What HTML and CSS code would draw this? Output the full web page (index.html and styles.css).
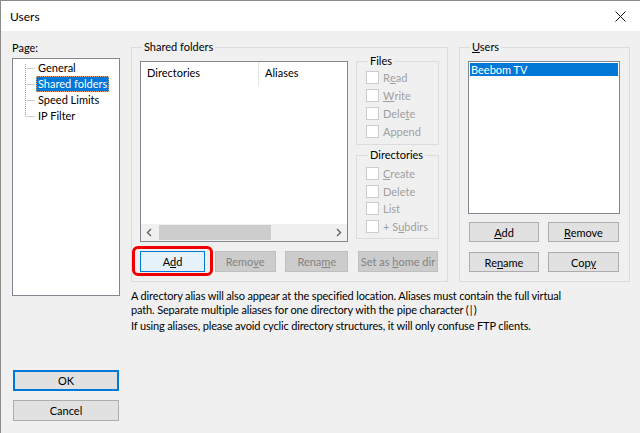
FILE: index.html
```html
<!DOCTYPE html>
<html>
<head>
<meta charset="utf-8">
<link rel="stylesheet" href="styles.css">
</head>
<body>
<div class="window">
  <div class="titlebar">
    <span class="title">Users</span>
    <svg class="close" width="11" height="11" viewBox="0 0 11 11"><path d="M0.5 0.5 L10.5 10.5 M10.5 0.5 L0.5 10.5" stroke="#111" stroke-width="1"/></svg>
  </div>
  <div class="body">
    <div class="leftcol">
      <div class="label">Page:</div>
      <div class="tree">
        <svg class="tree-lines" width="23" height="64" viewBox="0 0 23 64">
          <path d="M12.5 4 V56 M12.5 8.5 H22 M12.5 24.5 H22 M12.5 40.5 H22 M12.5 56.5 H22" stroke="#a0a0a0" stroke-width="1" stroke-dasharray="1 1" fill="none"/>
        </svg>
        <ul class="tree-items">
          <li><span>General</span></li>
          <li class="sel"><span>Shared folders</span></li>
          <li><span>Speed Limits</span></li>
          <li><span>IP Filter</span></li>
        </ul>
      </div>
      <button class="btn ok">OK</button>
      <button class="btn cancel">Cancel</button>
    </div>
    <div class="main">
      <div class="groups">
        <fieldset class="group shared">
          <legend>Shared folders</legend>
          <div class="shared-top">
            <div class="listview">
              <div class="lv-header">
                <div class="col col-dir">Directories</div>
                <div class="col col-alias">Aliases</div>
              </div>
              <div class="lv-body"></div>
              <div class="hscroll">
                <svg width="17" height="15" viewBox="0 0 17 15"><path d="M10 4 L6.5 7.5 L10 11" stroke="#606060" stroke-width="1.4" fill="none"/></svg>
                <div class="track"><div class="thumb"></div></div>
                <svg width="17" height="15" viewBox="0 0 17 15"><path d="M7 4 L10.5 7.5 L7 11" stroke="#606060" stroke-width="1.4" fill="none"/></svg>
              </div>
            </div>
            <div class="perms">
              <fieldset class="group sub files">
                <legend>Files</legend>
                <label class="chk"><span class="box"></span>R<u>e</u>ad</label>
                <label class="chk"><span class="box"></span><u>W</u>rite</label>
                <label class="chk"><span class="box"></span>Dele<u>t</u>e</label>
                <label class="chk"><span class="box"></span>Append</label>
              </fieldset>
              <fieldset class="group sub dirs">
                <legend>Directories</legend>
                <label class="chk"><span class="box"></span><u>C</u>reate</label>
                <label class="chk"><span class="box"></span>Delete</label>
                <label class="chk"><span class="box"></span>List</label>
                <label class="chk"><span class="box"></span>+ S<u>u</u>bdirs</label>
              </fieldset>
            </div>
          </div>
          <div class="btn-row">
            <button class="btn add focus">A<u>d</u>d</button>
            <button class="btn dis w-remove">Remo<u>v</u>e</button>
            <button class="btn dis w-rename">Rena<u>m</u>e</button>
            <button class="btn dis w-home">Set as <u>h</u>ome dir</button>
          </div>
        </fieldset>
        <fieldset class="group users">
          <legend><u>U</u>sers</legend>
          <div class="userlist">
            <div class="user sel">Beebom TV</div>
          </div>
          <div class="ubtns">
            <button class="btn ub"><u>A</u>dd</button>
            <button class="btn ub"><u>R</u>emove</button>
            <button class="btn ub">Re<u>n</u>ame</button>
            <button class="btn ub">Cop<u>y</u></button>
          </div>
        </fieldset>
      </div>
      <p class="note">A directory alias will also appear at the specified location. Aliases must contain the full virtual path. Separate multiple aliases for one directory with the pipe character (&#8201;|&#8201;)</p>
      <p class="note second">If using aliases, please avoid cyclic directory structures, it will only confuse FTP clients.</p>
    </div>
  </div>
</div>
</body>
</html>
```

FILE: styles.css
```css
* { box-sizing: border-box; }
html, body { margin: 0; padding: 0; }
body {
  font-family: Lato, "Noto Sans", sans-serif;
  font-size: 11px;
  color: #000;
  background: #f0f0f0;
}
.window {
  width: 640px;
  height: 433px;
  border-top: 1px solid #8a8a8a;
  border-left: 1px solid #8a8a8a;
  display: flex;
  flex-direction: column;
  overflow: hidden;
}
.titlebar {
  height: 30px;
  background: #fff;
  display: flex;
  align-items: center;
  justify-content: space-between;
  padding: 0 14px 0 9px;
  flex: none;
}
.title { font-size: 12px; }
.body {
  flex: 1;
  display: flex;
  gap: 11px;
  padding: 9px 11px 12px 11px;
}
.leftcol {
  width: 108px;
  display: flex;
  flex-direction: column;
  flex: none;
}
.label { line-height: 15px; height: 15px; margin-bottom: 3px; }
.tree {
  height: 238px;
  background: #fff;
  border: 1px solid #828790;
  display: flex;
  align-items: flex-start;
  padding-top: 1px;
}
.tree-lines { flex: none; }
.tree-items { list-style: none; margin: 0; padding: 0; }
.tree-items li { height: 16px; line-height: 16px; }
.tree-items li span { padding: 0 1px; display: inline-block; line-height: 14px; border: 1px solid transparent; }
.tree-items li.sel span { background: #0078d7; color: #fff; border: 1px dotted #e8a070; }
.btn {
  font-family: inherit;
  font-size: 11px;
  height: 21px;
  background: #e1e1e1;
  border: 1px solid #adadad;
  color: #000;
  padding: 0;
  margin: 0;
  white-space: nowrap;
}
.ok {
  margin-top: auto;
  margin-left: 1px;
  width: 106px;
  border-color: #0078d7;
  box-shadow: inset 0 0 0 1px #0078d7;
}
.cancel { margin-top: 9px; margin-left: 1px; width: 106px; }
.main { flex: 1; display: flex; flex-direction: column; }
.groups { display: flex; gap: 11px; }
fieldset.group {
  margin: 0;
  border: 1px solid #dcdcdc;
  min-width: 0;
}
fieldset.group legend {
  line-height: 14px;
  padding: 0 2px;
  margin-left: 2px;
}
.shared { width: 317px; padding: 0 8px 9px 8px; }
.users { width: 171px; padding: 7px 9px 9px 8px; }
.shared-top { display: flex; gap: 8px; align-items: flex-start; }
.listview {
  margin-top: 7px;
  width: 208px;
  height: 181px;
  background: #fff;
  border: 1px solid #828790;
  display: flex;
  flex-direction: column;
}
.lv-header { display: flex; height: 24px; align-items: center; }
.col { line-height: 22px; height: 24px; }
.col-dir { width: 118px; padding-left: 6px; border-right: 1px solid #e5e5e5; }
.col-alias { padding-left: 6px; }
.lv-body { flex: 1; }
.hscroll { height: 17px; display: flex; align-items: center; background: #f0f0f0; }
.hscroll svg { flex: none; }
.track { flex: 1; height: 15px; display: flex; align-items: center; }
.thumb { margin-left: 1px; width: 112px; height: 15px; background: #cdcdcd; }
.perms { width: 83px; display: flex; flex-direction: column; gap: 3px; }
.sub { padding: 0 4px 4px 9px; color: #000; }
.sub legend { margin-left: 1px; }
.chk {
  display: flex;
  align-items: center;
  height: 18px;
  color: #a0a0a0;
  white-space: nowrap;
}
.dirs { padding-top: 3px; padding-bottom: 3px; }
.dirs .chk { height: 17.5px; }
.box {
  width: 13px; height: 13px;
  background: #fff;
  border: 1px solid #cccccc;
  margin-right: 4px;
  flex: none;
}
.btn-row {
  margin-top: 9px;
  display: flex;
  justify-content: space-between;
  width: 298px;
}
.add {
  width: 65px;
  position: relative;
  background: #e5f1fb;
  border-color: #0078d7;
}
.add::after {
  content: "";
  position: absolute;
  top: -6px; bottom: -5px; left: -9px; right: -9px;
  border: 3px solid #ee0000;
  border-radius: 6px;
}
.dis { background: #cccccc; border-color: #bfbfbf; color: #838383; }
.w-remove { width: 61px; }
.w-rename { width: 63px; }
.w-home { width: 80px; }
.userlist {
  height: 153px;
  background: #fff;
  border: 1px solid #828790;
  padding: 1px;
}
.user { line-height: 13px; height: 13px; padding-left: 1px; }
.user.sel { background: #0078d7; color: #fff; }
.ubtns {
  margin-top: 8px;
  display: grid;
  grid-template-columns: 70px 71px;
  column-gap: 9px;
  row-gap: 10px;
  padding-left: 1px;
}
.ub { height: 20px; }
.note { margin: 7px 0 0 0; line-height: 14px; width: 434px; letter-spacing: -0.15px; }
.note.second { margin-top: 2px; }
```
